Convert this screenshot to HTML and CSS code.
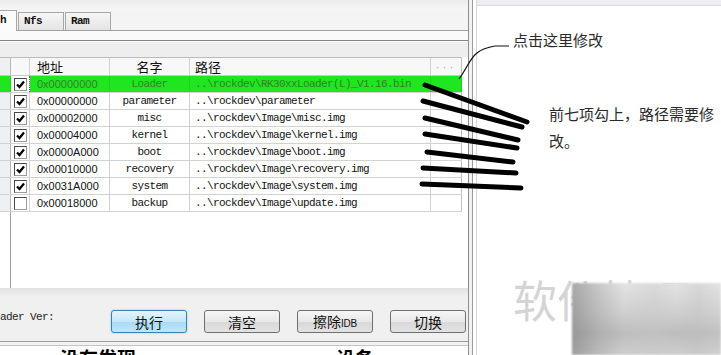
FILE: index.html
```html
<!DOCTYPE html>
<html lang="zh-CN">
<head>
<meta charset="utf-8">
<title>RKBatchTool</title>
<link rel="stylesheet" href="styles.css">
</head>
<body>
<div class="screen">
  <div class="app">
    <div class="topstrip"></div>
    <div class="tabs">
      <div class="tab active">h</div>
      <div class="tab">Nfs</div>
      <div class="tab">Ram</div>
    </div>
    <div class="pagetop"></div>
    <div class="band"></div>
    <div class="body">
      <div class="grid">
        <div class="row head">
          <div class="c rh"></div><div class="c ck"></div>
          <div class="c addr">地址</div><div class="c name">名字</div>
          <div class="c path">路径</div><div class="c dots">···</div>
        </div>
        <div class="row sel">
          <div class="c rh"></div><div class="c ck"><span class="box on"><svg viewBox="0 0 11 11"><path d="M2 5.5 L4.5 8 L9 2.5"/></svg></span></div>
          <div class="c addr">0x00000000</div><div class="c name">Loader</div>
          <div class="c path">..\rockdev\RK30xxLoader(L)_V1.16.bin</div><div class="c dots"></div>
        </div>
        <div class="row">
          <div class="c rh"></div><div class="c ck"><span class="box on"><svg viewBox="0 0 11 11"><path d="M2 5.5 L4.5 8 L9 2.5"/></svg></span></div>
          <div class="c addr">0x00000000</div><div class="c name">parameter</div>
          <div class="c path">..\rockdev\parameter</div><div class="c dots"></div>
        </div>
        <div class="row">
          <div class="c rh"></div><div class="c ck"><span class="box on"><svg viewBox="0 0 11 11"><path d="M2 5.5 L4.5 8 L9 2.5"/></svg></span></div>
          <div class="c addr">0x00002000</div><div class="c name">misc</div>
          <div class="c path">..\rockdev\Image\misc.img</div><div class="c dots"></div>
        </div>
        <div class="row">
          <div class="c rh"></div><div class="c ck"><span class="box on"><svg viewBox="0 0 11 11"><path d="M2 5.5 L4.5 8 L9 2.5"/></svg></span></div>
          <div class="c addr">0x00004000</div><div class="c name">kernel</div>
          <div class="c path">..\rockdev\Image\kernel.img</div><div class="c dots"></div>
        </div>
        <div class="row">
          <div class="c rh"></div><div class="c ck"><span class="box on"><svg viewBox="0 0 11 11"><path d="M2 5.5 L4.5 8 L9 2.5"/></svg></span></div>
          <div class="c addr">0x0000A000</div><div class="c name">boot</div>
          <div class="c path">..\rockdev\Image\boot.img</div><div class="c dots"></div>
        </div>
        <div class="row">
          <div class="c rh"></div><div class="c ck"><span class="box on"><svg viewBox="0 0 11 11"><path d="M2 5.5 L4.5 8 L9 2.5"/></svg></span></div>
          <div class="c addr">0x00010000</div><div class="c name">recovery</div>
          <div class="c path">..\rockdev\Image\recovery.img</div><div class="c dots"></div>
        </div>
        <div class="row">
          <div class="c rh"></div><div class="c ck"><span class="box on"><svg viewBox="0 0 11 11"><path d="M2 5.5 L4.5 8 L9 2.5"/></svg></span></div>
          <div class="c addr">0x0031A000</div><div class="c name">system</div>
          <div class="c path">..\rockdev\Image\system.img</div><div class="c dots"></div>
        </div>
        <div class="row">
          <div class="c rh"></div><div class="c ck"><span class="box"></span></div>
          <div class="c addr">0x00018000</div><div class="c name">backup</div>
          <div class="c path">..\rockdev\Image\update.img</div><div class="c dots"></div>
        </div>
      </div>
      <div class="log"></div>
    </div>
    <div class="controls">
      <div class="ver">ader Ver:</div>
      <button class="btn primary">执行</button>
      <button class="btn">清空</button>
      <button class="btn">擦除<span class="small">IDB</span></button>
      <button class="btn">切换</button>
    </div>
    <div class="gap"></div>
    <div class="status"><span class="s1">没有发现</span><span class="s2">设备</span></div>
  </div>
  <div class="sep"></div>
  <div class="pane">
    <div class="pane-top"></div>
    <div class="callout">点击这里修改</div>
    <div class="note">前七项勾上，路径需要修改。</div>
    <div class="watermark">软件技巧</div>
  </div>
  <div class="mosaic"></div>
  <svg class="marks" width="721" height="355" viewBox="0 0 721 355">
    <path class="thin" d="M459 79 C466 70 470 58 477 53 C483 48 489 47 495 46 L509 46"/>
    <g class="thick">
      <line x1="425" y1="85" x2="527" y2="122"/>
      <line x1="423" y1="101" x2="522" y2="127"/>
      <line x1="425" y1="118" x2="518" y2="140"/>
      <line x1="425" y1="134" x2="517" y2="148"/>
      <line x1="427" y1="152" x2="513" y2="162"/>
      <line x1="423" y1="168" x2="516" y2="173"/>
      <line x1="422" y1="184" x2="521" y2="188"/>
    </g>
  </svg>
</div>
</body>
</html>
```

FILE: styles.css
```css
* { box-sizing: border-box; }
html, body { margin: 0; padding: 0; background: #fff; }
.screen {
  position: relative;
  display: flex;
  width: 721px;
  height: 355px;
  overflow: hidden;
  font-family: "Liberation Sans", "Noto Sans CJK SC", sans-serif;
  color: #111;
}
.app {
  width: 468px;
  flex: none;
  display: flex;
  flex-direction: column;
  background: #f0f0f0;
}
.topstrip {
  height: 10px;
  background: linear-gradient(#ececec, #f6f6f6);
}
.tabs {
  height: 21px;
  display: flex;
  align-items: flex-end;
  border-bottom: 1px solid #a2a2a2;
  background: #f4f4f4;
}
.tab {
  height: 18px;
  width: 46px;
  flex: none;
  margin-left: 1px;
  border: 1px solid #a6a6a6;
  border-bottom: none;
  background: linear-gradient(#f6f6f6, #e4e4e4);
  font-family: "Liberation Mono", "DejaVu Sans Mono", monospace;
  font-weight: bold;
  font-size: 11px;
  letter-spacing: -0.6px;
  line-height: 17px;
  padding-left: 5px;
  color: #111;
}
.tab.active {
  width: 17px;
  height: 21px;
  margin-left: 0;
  margin-bottom: -1px;
  border-left: none;
  background: #fbfbfb;
  padding-left: 0;
  line-height: 19px;
}
.pagetop {
  height: 10px;
  background: #fafafa;
  border-bottom: 1px solid #858585;
}
.band {
  height: 16px;
  background: #eeeeee;
  border-top: 1px solid #fdfdfd;
}
.body { background: #fff; }
.grid { width: 462px; }
.row {
  display: grid;
  grid-template-columns: 11px 19px 80px 80px 241px 31px;
  height: 17px;
  border-bottom: 1px solid #d2d2d2;
}
.row.head {
  height: 19px;
  border-top: 1px solid #bcbcbc;
  border-bottom: 1px solid #c8c8c8;
  background: #f8f8f8;
}
.c {
  border-right: 1px solid #d0d0d0;
  white-space: nowrap;
  overflow: hidden;
  display: flex;
  align-items: center;
  font-size: 11px;
}
.c.rh { background: #eff0f1; border-right-color: #b8b8b8; }
.c.ck { justify-content: center; background: #fff; }
.c.addr { padding-left: 7px; font-family: "Liberation Sans", sans-serif; }
.c.name {
  justify-content: center;
  font-family: "Liberation Mono", "DejaVu Sans Mono", monospace;
  letter-spacing: -0.6px;
}
.c.path {
  padding-left: 5px;
  font-family: "Liberation Mono", "DejaVu Sans Mono", monospace;
  letter-spacing: -0.6px;
}
.c.dots { border-right-color: #c0c0c0; }
.head .c {
  font-family: "Noto Sans CJK SC", sans-serif;
  font-size: 13px;
  letter-spacing: 0;
  color: #111;
  background: transparent;
}
.head .c.rh { background: #eff0f1; }
.head .c.dots {
  justify-content: center;
  font-family: "Liberation Sans", sans-serif;
  font-size: 12px;
  letter-spacing: 3px;
  color: #c9a6cf;
}
.row.sel { background: #1fe61f; }
.row.sel .c { color: #3a7c2c; border-right-color: #1fd01f; }
.row.sel .c.rh { background: #1fe61f; }
.row.sel .c.ck { border-right: 1px dotted #555; }
.box {
  width: 13px;
  height: 13px;
  border: 1px solid #4a4a4a;
  border-right-color: #9a9a9a;
  border-bottom-color: #9a9a9a;
  background: #fff;
  display: block;
}
.box svg { display: block; width: 11px; height: 11px; }
.box path { fill: none; stroke: #000; stroke-width: 2.2; }
.log {
  height: 76px;
  margin-left: 10px;
  border-left: 1px solid #a0a0a0;
  background: #fff;
}
.controls {
  height: 54px;
  display: flex;
  align-items: flex-start;
  gap: 17px;
  padding-top: 22px;
  background: linear-gradient(#e2e2e2, #f0f0f0 9px, #f0f0f0);
  border-bottom: 1px solid #9e9e9e;
}
.ver {
  width: 94px;
  flex: none;
  margin-top: 1px;
  font-family: "Liberation Mono", "DejaVu Sans Mono", monospace;
  font-size: 11px;
  letter-spacing: -0.6px;
  line-height: 13px;
  color: #222;
}
.btn {
  width: 76px;
  height: 23px;
  flex: none;
  margin: 0;
  padding: 0;
  border: 1px solid #6f6f6f;
  border-radius: 3px;
  background: linear-gradient(#f6f6f6, #e8e8e8 50%, #d8d8d8 51%, #e2e2e2);
  font-family: "Noto Sans CJK SC", sans-serif;
  font-size: 14px;
  line-height: 20px;
  color: #111;
}
.btn.primary {
  border-color: #3c7fb1;
  background: linear-gradient(#e4f4fc, #c4e8f9 50%, #a9daf6 51%, #bde6f9);
  box-shadow: 0 0 2px #7fc8ee;
}
.btn .small { font-family: "Liberation Sans", sans-serif; font-size: 10px; letter-spacing: -0.3px; }
.gap {
  height: 4px;
  background: #f2f2f2;
  border-bottom: 1px solid #c4c4c4;
}
.status {
  height: 9px;
  background: #fff;
  overflow: hidden;
  font-family: "Noto Sans CJK SC", sans-serif;
  font-weight: bold;
  font-size: 19px;
  line-height: 24px;
  color: #000;
  white-space: nowrap;
}
.status .s1 { margin-left: 60px; }
.status .s2 { margin-left: 200px; }
.sep {
  width: 9px;
  flex: none;
  border-left: 1px solid #8d8d8d;
  border-right: 1px solid #d6d6d6;
  background: linear-gradient(to right, #f2f2f2 3px, #9a9a9a 3px, #9a9a9a 4px, #fff 4px);
}
.pane {
  flex: 1;
  background: #fff;
  display: flex;
  flex-direction: column;
  font-family: "Noto Sans CJK SC", sans-serif;
  color: #2a2a2a;
}
.pane-top {
  height: 6px;
  background: #eceef2;
  border-bottom: 1px solid #d8d8de;
}
.callout {
  margin: 24px 0 0 36px;
  font-size: 15px;
  line-height: 20px;
}
.note {
  width: 170px;
  margin: 50px 0 0 72px;
  font-size: 15px;
  line-height: 27px;
}
.watermark {
  margin: 123px 0 0 36px;
  font-size: 44px;
  line-height: 44px;
  color: #d4d4d4;
  white-space: nowrap;
}
.mosaic {
  position: absolute;
  left: 572px;
  top: 283px;
  width: 149px;
  height: 72px;
  background:
    linear-gradient(to right, rgba(120,120,120,0.55) 0, rgba(150,150,150,0.35) 18%, rgba(235,235,235,0) 35%, rgba(200,200,200,0.35) 55%, rgba(240,240,240,0) 70%, rgba(190,190,190,0.3) 85%, rgba(230,230,230,0.1) 100%),
    linear-gradient(#e4e4e4, #d0d0d0 40%, #bdbdbd 70%, #cfcfcf);
  filter: blur(1px);
}
.marks {
  position: absolute;
  left: 0;
  top: 0;
  pointer-events: none;
}
.marks .thin { fill: none; stroke: #111; stroke-width: 1.2; }
.marks .thick line { stroke: #000; stroke-width: 5; stroke-linecap: round; }
```
